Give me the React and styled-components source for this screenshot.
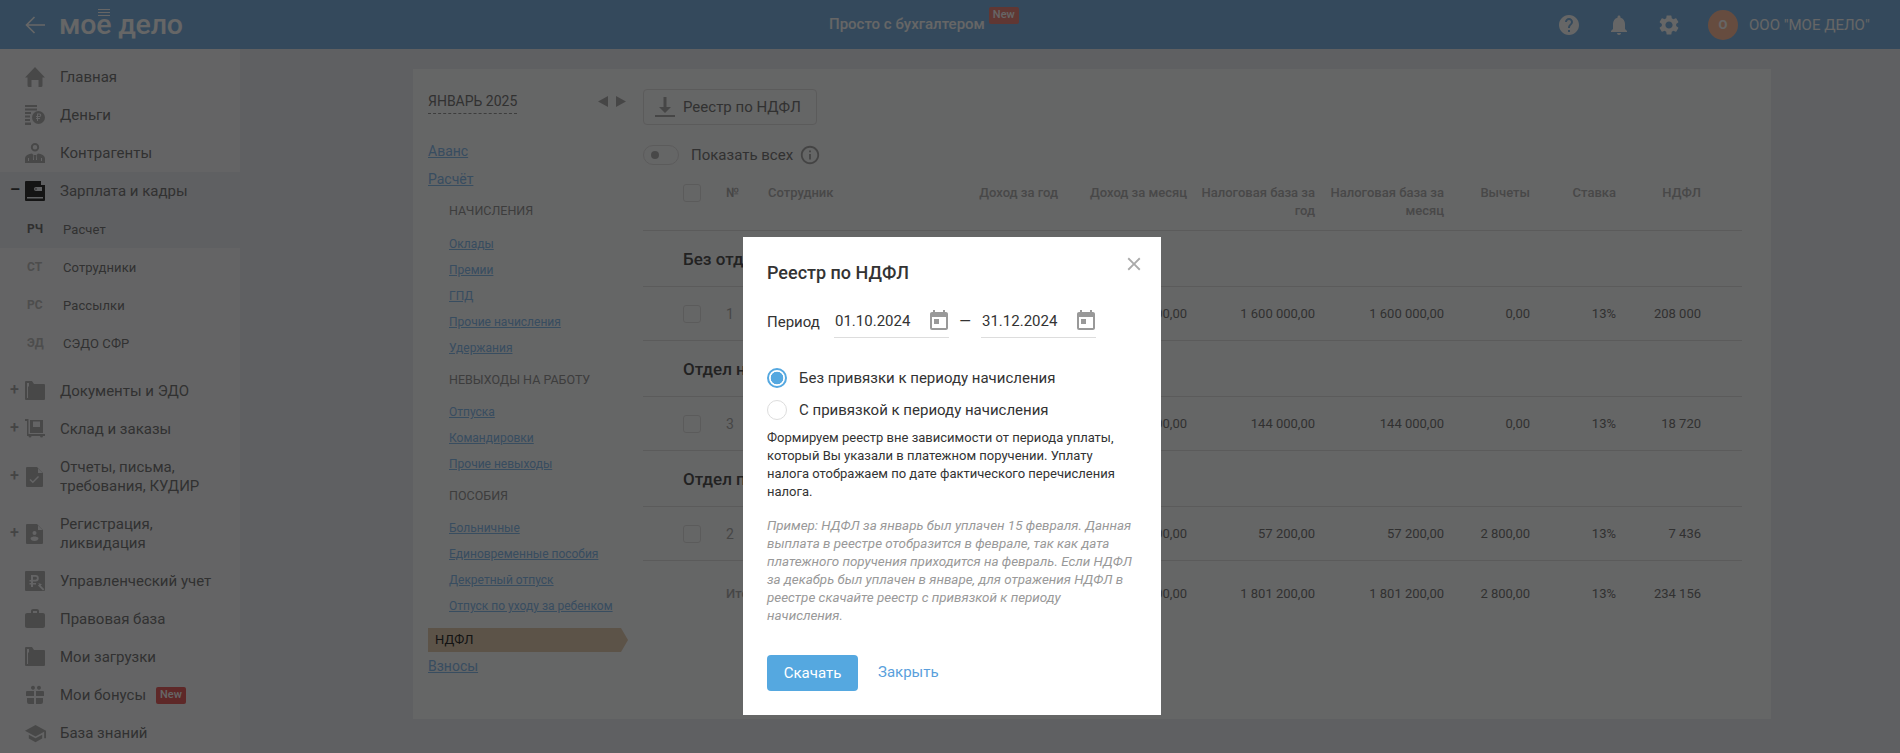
import React from "react"
import styled, { createGlobalStyle } from "styled-components"
import {
  MdClose,
  MdHelp,
  MdInfoOutline,
  MdNotifications,
  MdSchool,
  MdSettings,
  MdToday,
  MdWork,
} from "react-icons/md"

const GlobalStyle = createGlobalStyle`
  html, body {
    margin: 0;
    padding: 0;
    height: 100%;
    overflow: hidden;
    background: #eef0f4;
    font-family: Roboto, "Noto Sans", sans-serif;
    color: #333;
  }
  * { box-sizing: border-box; }
`

const Page = styled.div`
  position: relative;
  width: 1900px;
  height: 753px;
  overflow: hidden;
`

const Header = styled.header`
  display: flex;
  align-items: center;
  height: 49px;
  padding: 0 0 0 25px;
  background: #82b7e6;
  color: #fff;
`

const Logo = styled.div`
  display: flex;
  align-items: center;
  width: 755px;
  gap: 14px;
`

const LogoText = styled.span`
  font-size: 28.5px;
  font-weight: 500;
  line-height: 34px;
  letter-spacing: -0.2px;
  color: #fff;
`

const LogoMark = styled.span`
  position: relative;
  &::before {
    content: "";
    position: absolute;
    left: 2px;
    right: 1px;
    top: 1px;
    height: 7px;
    background: repeating-linear-gradient(#fff 0 1.5px, transparent 1.5px 3px);
  }
`

const Promo = styled.div`
  width: 777px;
  padding-left: 49px;
  font-size: 15px;
  font-weight: 500;
  line-height: 49px;
`

const NewBadge = styled.span`
  display: inline-block;
  padding: 0 4px;
  height: 17px;
  margin-left: ${({ $inline }) => ($inline ? "10px" : "4px")};
  border-radius: 2px;
  background: ${({ $inline }) => ($inline ? "#ea6464" : "#f08a80")};
  color: #fff;
  font-size: 11px;
  font-weight: 500;
  line-height: 15px;
  vertical-align: ${({ $inline }) => ($inline ? "1px" : "11px")};
`

const TopIcons = styled.div`
  display: flex;
  align-items: center;
  color: #fff;
`

const TopIcon = styled.span`
  display: flex;
  width: 24px;
  height: 24px;
  margin-right: 26px;
  font-size: 24px;
`

const Avatar = styled.span`
  width: 30px;
  height: 30px;
  margin-left: 1px;
  margin-right: 11px;
  border-radius: 50%;
  background: #ffbf9e;
  text-align: center;
  font-size: 13px;
  font-weight: 700;
  line-height: 30px;
`

const Company = styled.span`
  font-size: 15px;
`

const Body = styled.div`
  display: flex;
  height: 704px;
`

const Sidebar = styled.nav`
  flex: none;
  width: 240px;
  padding-top: 9px;
  background: #fafbfd;
`

const Group = styled.div`
  background: ${({ $active }) => ($active ? "#eef0f4" : "transparent")};
`

const NavItem = styled.div`
  display: flex;
  align-items: center;
  position: relative;
  padding: 9.5px 0 9.5px 25px;
  font-size: 15px;
  line-height: 19px;
  color: #7c7c7c;
`

const Expander = styled.span`
  position: absolute;
  left: 10px;
  top: 50%;
  margin-top: -11px;
  color: ${({ $active }) => ($active ? "#444" : "#aaa")};
  font-size: 16px;
  line-height: 20px;
  font-weight: ${({ $active }) => ($active ? 700 : 500)};
`

const NavIcon = styled.span`
  display: flex;
  flex: none;
  align-items: center;
  justify-content: center;
  width: 20px;
  height: 18px;
  margin-right: 15px;
  color: ${({ $active }) => ($active ? "#333" : "#b5b5b5")};
  font-size: ${({ $size }) => $size || 20}px;
  svg {
    flex: none;
  }
`

const SubItem = styled.div`
  display: flex;
  align-items: center;
  height: 38px;
  padding-left: 27px;
  font-size: 13px;
  letter-spacing: 0.1px;
  color: #7c7c7c;
`

const Abbr = styled.span`
  width: 36px;
  font-size: 12px;
  font-weight: 700;
  color: ${({ $active }) => ($active ? "#777" : "#c0c0c0")};
`

const SubList = styled.div`
  margin-bottom: 10px;
`

const Main = styled.main`
  flex: 1;
  padding: 20px 129px 0 173px;
`

const Card = styled.section`
  display: flex;
  height: 650px;
  background: #fdfeff;
`

const LeftMenu = styled.div`
  flex: none;
  width: 230px;
  padding: 23px 0 0 15px;
`

const MonthRow = styled.div`
  display: flex;
  align-items: flex-start;
  justify-content: space-between;
  width: 198px;
  height: 49px;
`

const Month = styled.span`
  height: 22px;
  border-bottom: 1px dashed #999;
  font-size: 14px;
  line-height: 19px;
  color: #7c7c7c;
`

const Arrows = styled.span`
  display: flex;
  gap: 8px;
  padding-top: 4px;
  color: #b0b0b0;
`

const TopLink = styled.a`
  display: block;
  height: 28px;
  font-size: 14px;
  line-height: 20px;
  color: #8cc0f0;
  text-decoration: underline;
`

const MenuTitle = styled.div`
  height: ${({ $first }) => ($first ? "34px" : "38px")};
  padding: ${({ $first }) => ($first ? "6px" : "11px")} 0 0 21px;
  font-size: 12.5px;
  line-height: 16px;
  color: #999;
`

const MenuLink = styled.a`
  display: block;
  height: 26px;
  padding-left: 21px;
  font-size: 12px;
  line-height: 26px;
  color: #8cc0f0;
  text-decoration: underline;
`

const TabSection = styled.div`
  padding-top: 9px;
`

const ActiveTab = styled.div`
  width: 200px;
  height: 24px;
  margin: 0 0 4px 0;
  padding-left: 7px;
  background: #e6cfb5;
  clip-path: polygon(0 0, 193px 0, 100% 50%, 193px 100%, 0 100%);
  font-size: 13px;
  line-height: 23px;
  color: #333;
`

const Content = styled.div`
  flex: 1;
  padding-top: 20px;
  padding-right: 29px;
`

const ExportButton = styled.button`
  display: flex;
  align-items: center;
  gap: 8px;
  width: 174px;
  height: 36px;
  padding: 0 0 0 11px;
  border: 1px solid #e4e4e4;
  border-radius: 4px;
  background: transparent;
  font-family: inherit;
  font-size: 15px;
  color: #7c7c7c;
`

const ToggleRow = styled.div`
  display: flex;
  align-items: center;
  height: 20px;
  margin-top: 20px;
  margin-bottom: 19px;
  font-size: 15px;
  color: #7c7c7c;
`

const Toggle = styled.span`
  display: flex;
  align-items: center;
  width: 36px;
  height: 20px;
  margin-right: 12px;
  padding-left: 7px;
  border: 1px solid #e4e4e4;
  border-radius: 10px;
  &::before {
    content: "";
    width: 8px;
    height: 8px;
    border-radius: 50%;
    background: #b5b5b5;
  }
`

const InfoIcon = styled.span`
  display: flex;
  margin-left: 6px;
  font-size: 22px;
  color: #aaa;
`

const TableRow = styled.div`
  display: grid;
  grid-template-columns: 40px 43px 42px 161px 129px 129px 128px 129px 86px 86px 85px 41px;
  align-items: center;
  height: ${({ $h }) => $h}px;
  border-bottom: 1px solid #e4e4e4;
  font-size: 13px;
  color: #7c7c7c;
  ${({ $plain }) => $plain && "border-bottom: 0;"}
`

const HeadRow = styled(TableRow)`
  align-items: start;
  font-weight: 500;
  line-height: 18px;
  color: #b4b4b4;
`

const Check = styled.span`
  grid-column: 2;
  width: 18px;
  height: 18px;
  border: 1px solid #e4e4e4;
  border-radius: 3px;
`

const Num = styled.span`
  grid-column: ${({ $wide }) => ($wide ? "3 / 5" : "3")};
  font-size: ${({ $small }) => ($small ? "13px" : "14px")};
  font-weight: ${({ $small }) => ($small ? 500 : 400)};
  color: #b0b0b0;
`

const Name = styled.span`
  grid-column: 4;
`

const Money = styled.span`
  text-align: right;
`

const GroupRow = styled.div`
  display: flex;
  align-items: center;
  height: 56px;
  padding-left: 40px;
  border-bottom: 1px solid #e4e4e4;
  font-size: 17px;
  font-weight: 500;
  color: #555;
`

const Overlay = styled.div`
  position: absolute;
  inset: 0;
  display: flex;
  justify-content: center;
  align-items: flex-start;
  padding: 237px 0 0 4px;
  background: rgba(0, 0, 0, 0.6);
`

const Modal = styled.div`
  position: relative;
  width: 418px;
  height: 478px;
  padding: 25px 24px 0 24px;
  background: #fff;
`

const CloseButton = styled.span`
  position: absolute;
  top: 16px;
  right: 16px;
  display: flex;
  font-size: 22px;
  color: #aaa;
`

const ModalTitle = styled.h2`
  margin: 0 0 20px;
  font-size: 18px;
  font-weight: 500;
  line-height: 22px;
  color: #333;
`

const PeriodRow = styled.div`
  display: flex;
  align-items: center;
  height: 34px;
  margin-bottom: 30px;
  font-size: 15px;
  color: #333;
`

const PeriodLabel = styled.span`
  width: 67px;
  padding-top: 1px;
`

const DateField = styled.span`
  display: flex;
  align-items: center;
  justify-content: space-between;
  width: 115px;
  height: 34px;
  padding: 1px 0 0 1px;
  border-bottom: 1px solid #ddd;
`

const CalIcon = styled.span`
  display: flex;
  margin-right: -2px;
  font-size: 24px;
  color: #999;
`

const Dash = styled.span`
  width: 32px;
  text-align: center;
`

const RadioRow = styled.label`
  display: flex;
  align-items: center;
  height: 20px;
  margin-bottom: 12px;
  font-size: 15px;
  color: #333;
`

const Radio = styled.span`
  flex: none;
  width: 20px;
  height: 20px;
  margin-right: 12px;
  border-radius: 50%;
  border: ${({ $on }) => ($on ? "2px solid #55a8e0" : "1px solid #ddd")};
  background: ${({ $on }) =>
    $on ? "radial-gradient(circle, #55a8e0 0 6px, #fff 6.6px)" : "#fff"};
`

const Note = styled.p`
  margin: -3px 0 16px;
  font-size: 13px;
  line-height: 18px;
  color: #333;
`

const Example = styled.p`
  margin: 0 0 30px;
  font-size: 13.4px;
  font-style: italic;
  line-height: 18px;
  color: #999;
`

const Actions = styled.div`
  display: flex;
  align-items: center;
  gap: 20px;
`

const PrimaryButton = styled.button`
  width: 91px;
  height: 36px;
  border: 0;
  border-radius: 4px;
  background: #55a8e0;
  font-family: inherit;
  font-size: 15px;
  color: #fff;
`

const TextLink = styled.a`
  margin-top: -3px;
  font-size: 15px;
  color: #5a9fdc;
`

const Svg = ({ children, w = 20, h = 20 }) => (
  <svg width={w} height={h} viewBox="0 0 20 20" fill="currentColor">
    {children}
  </svg>
)

const BackArrow = () => (
  <svg width="20" height="20" viewBox="0 0 20 20" fill="none" stroke="#fff" strokeWidth="1.6">
    <path d="M20 10H1.500M9.500 2l-8 8 8 8" />
  </svg>
)

const HomeIcon = () => (
  <Svg>
    <path d="M10 0l10 10.500h-2.500V18.500a1.500 1.500 0 0 1-1.500 1.500h-2.500v-7h-7v7H4a1.500 1.500 0 0 1-1.500-1.500V10.500H0z" />
  </Svg>
)

const CoinsIcon = () => (
  <Svg>
    <path d="M0 0h12v2H0zM0 3.500h12v2H0zM0 7h6v2H0zM0 10.500h5v2H0zM0 14h5v2H0zM0 17.500h6V20H0z" />
    <path
      fillRule="evenodd"
      d="M13.500 6a6.500 6.500 0 1 1 0 13 6.500 6.500 0 0 1 0-13zM12 8.500V11h-1v1h1v1h-1v1h1v2h1v-2h2v-1h-2v-1h1.500a1.750 1.750 0 0 0 0-3.500H12zm1 1h1.500a.75.75 0 0 1 0 1.500H13V9.500z"
    />
  </Svg>
)

const PartnerIcon = () => (
  <Svg>
    <path d="M10 0a4.200 4.200 0 0 1 4.200 4.200A4.200 4.200 0 0 1 10 8.400a4.200 4.200 0 0 1-4.200-4.200A4.200 4.200 0 0 1 10 0zm0 2a2.200 2.200 0 1 0 0 4.400A2.200 2.200 0 0 0 10 2z" />
    <path d="M0 20v-4.500c0-3 3.500-4.500 7-5l1.500 1.500L8 17h1V12h2v5h1l-.5-5L13 10.500c3.500.5 7 2 7 5V20H0zM3 15v3h1v-3H3zm13 0v3h1v-3h-1z" />
  </Svg>
)

const WalletIcon = () => (
  <Svg>
    <path
      fillRule="evenodd"
      d="M1 0h15v4h4v15a1 1 0 0 1-1 1H1a1 1 0 0 1-1-1V1a1 1 0 0 1 1-1zm10 6a2 2 0 0 0 0 4h6V6h-6zm0 1.300a.7.7 0 1 1 0 1.400.7.7 0 0 1 0-1.400zM2 16v1.500h16V16H2z"
    />
  </Svg>
)

const FolderIcon = () => (
  <Svg>
    <path
      fillRule="evenodd"
      d="M0 1a1 1 0 0 1 1-1h6l2 3h10a1 1 0 0 1 1 1v14a1 1 0 0 1-1 1H1a1 1 0 0 1-1-1V1zm2 1v15h1V5.500h1V2H2z"
    />
  </Svg>
)

const CartIcon = () => (
  <Svg>
    <path
      fillRule="evenodd"
      d="M0 0h3.500v15h16.500v2h-2a1.500 1.500 0 0 1-3 0H6.500a1.500 1.500 0 0 1-3 0H2V2H0V0zm5 1h13v13H5V1zm3 1.500V8h7V2.500H8z"
    />
  </Svg>
)

const DocCheckIcon = () => (
  <Svg>
    <path
      fillRule="evenodd"
      d="M2 0h10l6 6v13a1 1 0 0 1-1 1H2a1 1 0 0 1-1-1V1a1 1 0 0 1 1-1zm11 1.500V6h4.500L13 1.500zM5.500 12L4.500 13l3.300 3.300L14 10l-1-1-5.200 5.200L5.500 12z"
    />
  </Svg>
)

const DocPersonIcon = () => (
  <Svg>
    <path
      fillRule="evenodd"
      d="M2 0h10l6 6v13a1 1 0 0 1-1 1H2a1 1 0 0 1-1-1V1a1 1 0 0 1 1-1zm11 1.500V6h4.500L13 1.500zM9.500 7a2 2 0 1 0 0 4 2 2 0 0 0 0-4zM5.500 14c0 2 1.800 3 4 3s4-1 4-3c-1-1-2.500-1.500-4-1.500s-3 .5-4 1.500z"
    />
  </Svg>
)

const RubleIcon = () => (
  <Svg>
    <path
      fillRule="evenodd"
      d="M1 0h18a1 1 0 0 1 1 1v18a1 1 0 0 1-1 1H1a1 1 0 0 1-1-1V1a1 1 0 0 1 1-1zm5 4v5H4.500v1.500H6V12H4.500v1.500H6V16h2v-2.500h3V12H8v-1.500h2.500a3.250 3.250 0 0 0 0-6.500H6zm2 1.800h2.500a1.450 1.450 0 0 1 0 2.900H8V5.800zM13 12l1.300 1.300-1.300 1.300 5 5 1.300-1.300-3.700-3.700 1.300-1.300L13 12z"
    />
  </Svg>
)

const GiftIcon = () => (
  <Svg>
    <path d="M7 1a2 2 0 1 1 0 3.500A2 2 0 0 1 7 1zM13 1a2 2 0 1 1 0 3.500A2 2 0 0 1 13 1z" />
    <path d="M1 7a1 1 0 0 1 1-1h7v5H1V7zM11 6h7a1 1 0 0 1 1 1v4h-8V6zM2 13h7v6H4a2 2 0 0 1-2-2v-4zM11 13h7v4a2 2 0 0 1-2 2h-5v-6z" />
  </Svg>
)

const DownloadIcon = () => (
  <svg width="20" height="20" viewBox="0 0 20 20" fill="#b0b0b0">
    <path d="M8.500 0h3v10H16l-6 6-6-6h4.500zM0 18h20v2H0z" />
  </svg>
)

const menuGroups = [
  { title: "НАЧИСЛЕНИЯ", links: ["Оклады", "Премии", "ГПД", "Прочие начисления", "Удержания"] },
  { title: "НЕВЫХОДЫ НА РАБОТУ", links: ["Отпуска", "Командировки", "Прочие невыходы"] },
  {
    title: "ПОСОБИЯ",
    links: ["Больничные", "Единовременные пособия", "Декретный отпуск", "Отпуск по уходу за ребенком"],
  },
]

const rows = [
  { group: "Без отдела", num: "1", month: "1 600 000,00", deduct: "0,00", tax: "208 000" },
  { group: "Отдел н", num: "3", month: "144 000,00", deduct: "0,00", tax: "18 720" },
  { group: "Отдел п", num: "2", month: "57 200,00", deduct: "2 800,00", tax: "7 436" },
]

const subItems = [
  ["СТ", "Сотрудники"],
  ["РС", "Рассылки"],
  ["ЭД", "СЭДО СФР"],
]

const Amounts = ({ month, deduct, tax }) => (
  <>
    <Money>{month}</Money>
    <Money>{month}</Money>
    <Money>{month}</Money>
    <Money>{month}</Money>
    <Money>{deduct}</Money>
    <Money>13%</Money>
    <Money>{tax}</Money>
  </>
)

export default function App() {
  return (
    <Page>
      <GlobalStyle />
      <Header>
        <Logo>
          <BackArrow />
          <LogoText>
            мо<LogoMark>е</LogoMark> дело
          </LogoText>
        </Logo>
        <Promo>
          Просто с бухгалтером
          <NewBadge>New</NewBadge>
        </Promo>
        <TopIcons>
          <TopIcon>
            <MdHelp />
          </TopIcon>
          <TopIcon>
            <MdNotifications />
          </TopIcon>
          <TopIcon>
            <MdSettings />
          </TopIcon>
          <Avatar>О</Avatar>
          <Company>ООО "МОЕ ДЕЛО"</Company>
        </TopIcons>
      </Header>
      <Body>
        <Sidebar>
          <NavItem>
            <NavIcon>
              <HomeIcon />
            </NavIcon>
            Главная
          </NavItem>
          <NavItem>
            <NavIcon>
              <CoinsIcon />
            </NavIcon>
            Деньги
          </NavItem>
          <NavItem>
            <NavIcon>
              <PartnerIcon />
            </NavIcon>
            Контрагенты
          </NavItem>
          <Group $active>
            <NavItem>
              <Expander $active>–</Expander>
              <NavIcon $active>
                <WalletIcon />
              </NavIcon>
              Зарплата и кадры
            </NavItem>
            <SubItem>
              <Abbr $active>РЧ</Abbr>
              Расчет
            </SubItem>
          </Group>
          <SubList>
            {subItems.map(([abbr, label]) => (
              <SubItem key={abbr}>
                <Abbr>{abbr}</Abbr>
                {label}
              </SubItem>
            ))}
          </SubList>
          <NavItem>
            <Expander>+</Expander>
            <NavIcon>
              <FolderIcon />
            </NavIcon>
            Документы и ЭДО
          </NavItem>
          <NavItem>
            <Expander>+</Expander>
            <NavIcon>
              <CartIcon />
            </NavIcon>
            Склад и заказы
          </NavItem>
          <NavItem>
            <Expander>+</Expander>
            <NavIcon>
              <DocCheckIcon />
            </NavIcon>
            <span>
              Отчеты, письма,
              <br />
              требования, КУДИР
            </span>
          </NavItem>
          <NavItem>
            <Expander>+</Expander>
            <NavIcon>
              <DocPersonIcon />
            </NavIcon>
            <span>
              Регистрация,
              <br />
              ликвидация
            </span>
          </NavItem>
          <NavItem>
            <NavIcon>
              <RubleIcon />
            </NavIcon>
            Управленческий учет
          </NavItem>
          <NavItem>
            <NavIcon $size={24}>
              <MdWork />
            </NavIcon>
            Правовая база
          </NavItem>
          <NavItem>
            <NavIcon>
              <FolderIcon />
            </NavIcon>
            Мои загрузки
          </NavItem>
          <NavItem>
            <NavIcon>
              <GiftIcon />
            </NavIcon>
            Мои бонусы
            <NewBadge $inline>New</NewBadge>
          </NavItem>
          <NavItem>
            <NavIcon $size={23}>
              <MdSchool />
            </NavIcon>
            База знаний
          </NavItem>
        </Sidebar>
        <Main>
          <Card>
            <LeftMenu>
              <MonthRow>
                <Month>ЯНВАРЬ 2025</Month>
                <Arrows>
                  <svg width="10" height="11" viewBox="0 0 10 11" fill="currentColor">
                    <path d="M10 0v11L0 5.500z" />
                  </svg>
                  <svg width="10" height="11" viewBox="0 0 10 11" fill="currentColor">
                    <path d="M0 0v11l10-5.500z" />
                  </svg>
                </Arrows>
              </MonthRow>
              <TopLink>Аванс</TopLink>
              <TopLink>Расчёт</TopLink>
              {menuGroups.map((g, i) => (
                <div key={g.title}>
                  <MenuTitle $first={i === 0}>{g.title}</MenuTitle>
                  {g.links.map(link => (
                    <MenuLink key={link}>{link}</MenuLink>
                  ))}
                </div>
              ))}
              <TabSection>
                <ActiveTab>НДФЛ</ActiveTab>
                <TopLink>Взносы</TopLink>
              </TabSection>
            </LeftMenu>
            <Content>
              <ExportButton>
                <DownloadIcon />
                Реестр по НДФЛ
              </ExportButton>
              <ToggleRow>
                <Toggle />
                Показать всех
                <InfoIcon>
                  <MdInfoOutline />
                </InfoIcon>
              </ToggleRow>
              <HeadRow $h={47}>
                <Check />
                <Num $small>№</Num>
                <Name>Сотрудник</Name>
                <Money>Доход за год</Money>
                <Money>Доход за месяц</Money>
                <Money>Налоговая база за год</Money>
                <Money>Налоговая база за месяц</Money>
                <Money>Вычеты</Money>
                <Money>Ставка</Money>
                <Money>НДФЛ</Money>
              </HeadRow>
              {rows.map(r => (
                <React.Fragment key={r.num}>
                  <GroupRow>{r.group}</GroupRow>
                  <TableRow $h={54}>
                    <Check />
                    <Num>{r.num}</Num>
                    <Name />
                    <Amounts {...r} />
                  </TableRow>
                </React.Fragment>
              ))}
              <TableRow $h={64} $plain>
                <Num $small $wide>
                  Итого
                </Num>
                <Amounts month="1 801 200,00" deduct="2 800,00" tax="234 156" />
              </TableRow>
            </Content>
          </Card>
        </Main>
      </Body>
      <Overlay>
        <Modal>
          <CloseButton>
            <MdClose />
          </CloseButton>
          <ModalTitle>Реестр по НДФЛ</ModalTitle>
          <PeriodRow>
            <PeriodLabel>Период</PeriodLabel>
            <DateField>
              01.10.2024
              <CalIcon>
                <MdToday />
              </CalIcon>
            </DateField>
            <Dash>—</Dash>
            <DateField>
              31.12.2024
              <CalIcon>
                <MdToday />
              </CalIcon>
            </DateField>
          </PeriodRow>
          <RadioRow>
            <Radio $on />
            Без привязки к периоду начисления
          </RadioRow>
          <RadioRow>
            <Radio />С привязкой к периоду начисления
          </RadioRow>
          <Note>
            Формируем реестр вне зависимости от периода уплаты, который Вы указали в платежном
            поручении. Уплату налога отображаем по дате фактического перечисления налога.
          </Note>
          <Example>
            Пример: НДФЛ за январь был уплачен 15 февраля. Данная выплата в реестре отобразится в
            феврале, так как дата платежного поручения приходится на февраль. Если НДФЛ за декабрь
            был уплачен в январе, для отражения НДФЛ в реестре скачайте реестр с привязкой к периоду
            начисления.
          </Example>
          <Actions>
            <PrimaryButton>Скачать</PrimaryButton>
            <TextLink>Закрыть</TextLink>
          </Actions>
        </Modal>
      </Overlay>
    </Page>
  )
}
